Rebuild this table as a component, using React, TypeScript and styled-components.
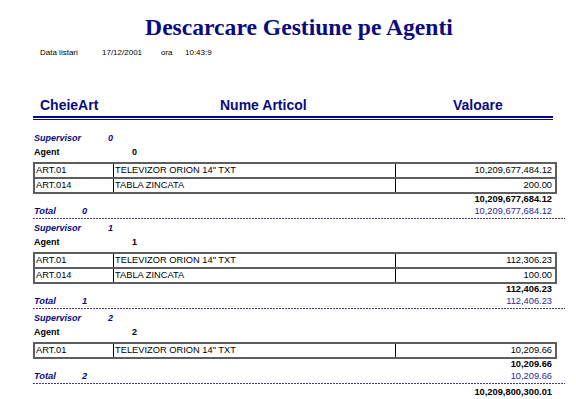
import React from "react";
import styled, { createGlobalStyle } from "styled-components";

const Global = createGlobalStyle`
  html, body { margin: 0; padding: 0; background: #fff; }
  body { font-family: "Liberation Sans", Arial, sans-serif; }
`;

const NAVY = "#0a0a80";
const BLUE = "#2a2a9a";

const Page = styled.div`
  width: 576px;
  height: 399px;
  overflow: hidden;
  background: #fff;
`;

const Title = styled.h1`
  margin: 0;
  padding: 12px 0 0 22px;
  height: 30px;
  line-height: 30px;
  text-align: center;
  font-family: "Liberation Serif", "Times New Roman", serif;
  font-weight: bold;
  font-size: 23.6px;
  color: ${NAVY};
`;

const Meta = styled.div`
  display: flex;
  padding-left: 40px;
  margin-top: 5px;
  height: 12px;
  line-height: 12px;
  font-size: 8px;
  color: #000;
`;

const MetaItem = styled.span<{ $w?: number }>`
  width: ${(p) => (p.$w ? `${p.$w}px` : "auto")};
  flex: none;
`;

const Header = styled.div`
  display: grid;
  grid-template-columns: 187px 233px 100px;
  margin: 35px 0 0 33px;
  width: 520px;
  height: 22px;
  line-height: 22px;
  font-size: 14px;
  font-weight: bold;
  color: ${NAVY};
`;

const HeaderCell = styled.div<{ $pl: number }>`
  padding-left: ${(p) => p.$pl}px;
  white-space: nowrap;
`;

const DoubleRule = styled.div`
  margin-left: 33px;
  width: 520px;
  height: 1px;
  border-top: 2px solid ${NAVY};
  border-bottom: 1px solid ${NAVY};
`;

const Report = styled.div`
  padding-left: 33px;
  margin-top: 11px;
`;

const Section = styled.div``;

const GroupLine = styled.div<{ $italic?: boolean; $color: string }>`
  display: flex;
  height: 14px;
  line-height: 14px;
  font-size: 9px;
  font-weight: bold;
  font-style: ${(p) => (p.$italic ? "italic" : "normal")};
  color: ${(p) => p.$color};
  padding-left: 1px;
`;

const GroupLabel = styled.span<{ $w: number }>`
  width: ${(p) => p.$w}px;
  flex: none;
`;

const Table = styled.div`
  width: 524px;
  margin-top: 3px;
  border-left: 2px solid #5e5e5e;
  border-right: 2px solid #5e5e5e;
  border-top: 2px solid #5e5e5e;
  box-sizing: border-box;
`;

const Row = styled.div`
  display: grid;
  grid-template-columns: 78px 282px 1fr;
  height: 15px;
  border-bottom: 2px solid #5e5e5e;
  box-sizing: border-box;
  font-size: 9.3px;
  line-height: 13px;
  color: #000;
`;

const Cell = styled.div<{ $divider?: boolean; $right?: boolean }>`
  padding: 0 3px 0 1px;
  text-align: ${(p) => (p.$right ? "right" : "left")};
  border-left: ${(p) => (p.$divider ? "1px solid #000" : "none")};
  white-space: nowrap;
  overflow: hidden;
`;

const SumLine = styled.div`
  width: 519px;
  height: 10px;
  line-height: 10px;
  text-align: right;
  font-size: 9.3px;
  font-weight: bold;
  color: #000;
`;

const TotalLine = styled.div`
  display: flex;
  justify-content: space-between;
  width: 519px;
  height: 14px;
  line-height: 14px;
  font-size: 9.3px;
`;

const TotalLabel = styled.span`
  display: flex;
  font-weight: bold;
  font-style: italic;
  color: ${NAVY};
  padding-left: 1px;
`;

const TotalValue = styled.span`
  color: ${BLUE};
`;

const Dashed = styled.div`
  width: 532px;
  height: 1px;
  margin: 0 0 2px;
  background-image: repeating-linear-gradient(
    to right,
    #3a3a90 0 2px,
    transparent 2px 3px
  );
`;

const GrandTotal = styled.div`
  width: 519px;
  height: 12px;
  line-height: 12px;
  text-align: right;
  font-size: 9.3px;
  font-weight: bold;
  color: #000;
`;

type Item = { code: string; name: string; value: string };
type Group = { id: string; items: Item[]; sum: string };

const groups: Group[] = [
  {
    id: "0",
    items: [
      { code: "ART.01", name: 'TELEVIZOR ORION 14" TXT', value: "10,209,677,484.12" },
      { code: "ART.014", name: "TABLA ZINCATA", value: "200.00" },
    ],
    sum: "10,209,677,684.12",
  },
  {
    id: "1",
    items: [
      { code: "ART.01", name: 'TELEVIZOR ORION 14" TXT', value: "112,306.23" },
      { code: "ART.014", name: "TABLA ZINCATA", value: "100.00" },
    ],
    sum: "112,406.23",
  },
  {
    id: "2",
    items: [{ code: "ART.01", name: 'TELEVIZOR ORION 14" TXT', value: "10,209.66" }],
    sum: "10,209.66",
  },
];

export default function App() {
  return (
    <Page>
      <Global />
      <Title>Descarcare Gestiune pe Agenti</Title>
      <Meta>
        <MetaItem $w={62}>Data listari</MetaItem>
        <MetaItem $w={59}>17/12/2001</MetaItem>
        <MetaItem $w={24}>ora</MetaItem>
        <MetaItem>10:43:9</MetaItem>
      </Meta>
      <Header>
        <HeaderCell $pl={7}>CheieArt</HeaderCell>
        <HeaderCell $pl={0}>Nume Articol</HeaderCell>
        <HeaderCell $pl={0}>Valoare</HeaderCell>
      </Header>
      <DoubleRule />
      <Report>
        {groups.map((g) => (
          <Section key={g.id}>
            <GroupLine $italic $color={NAVY}>
              <GroupLabel $w={74}>Supervisor</GroupLabel>
              <span>{g.id}</span>
            </GroupLine>
            <GroupLine $color="#000">
              <GroupLabel $w={98}>Agent</GroupLabel>
              <span>{g.id}</span>
            </GroupLine>
            <Table>
              {g.items.map((it) => (
                <Row key={it.code}>
                  <Cell>{it.code}</Cell>
                  <Cell $divider>{it.name}</Cell>
                  <Cell $divider $right>{it.value}</Cell>
                </Row>
              ))}
            </Table>
            <SumLine>{g.sum}</SumLine>
            <TotalLine>
              <TotalLabel>
                <GroupLabel $w={48}>Total</GroupLabel>
                <span>{g.id}</span>
              </TotalLabel>
              <TotalValue>{g.sum}</TotalValue>
            </TotalLine>
            <Dashed />
          </Section>
        ))}
        <GrandTotal>10,209,800,300.01</GrandTotal>
      </Report>
    </Page>
  );
}
